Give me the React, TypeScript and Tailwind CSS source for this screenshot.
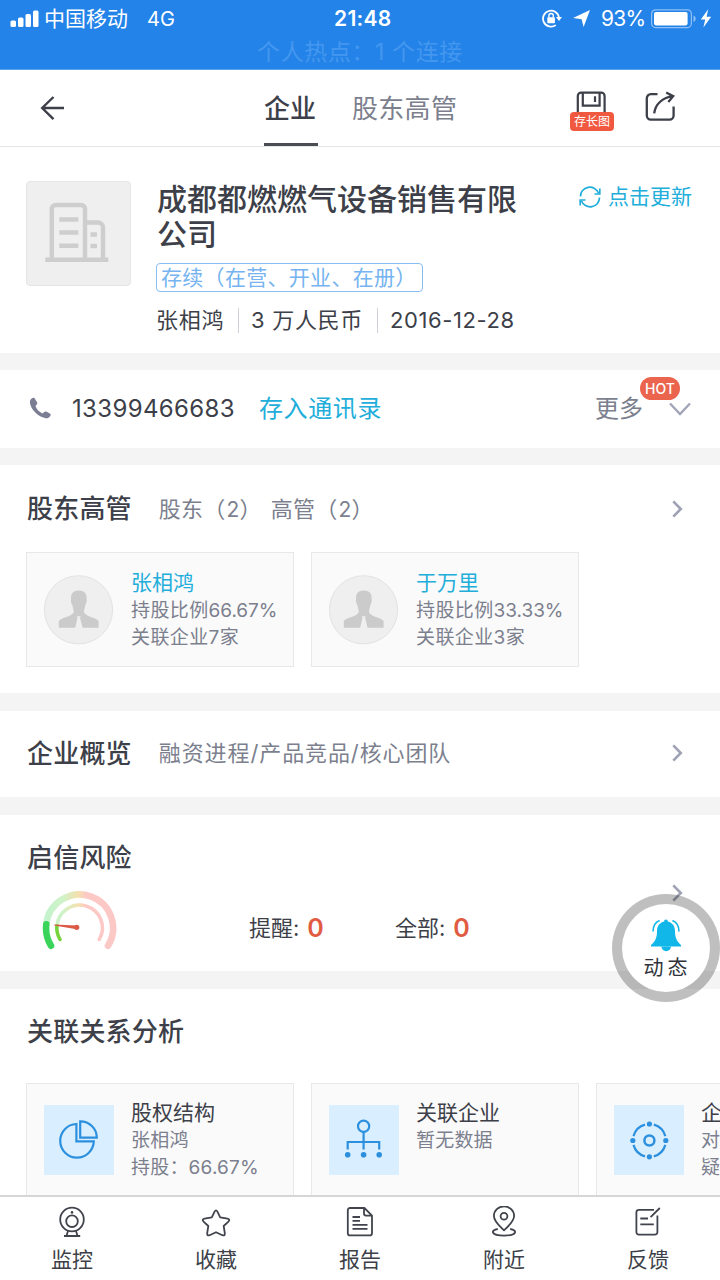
import React from "react";

const FONT = "font-['Inter','Noto_Sans_CJK_SC',sans-serif]";

function ChevronRight() {
  return (
    <svg className="block h-[20px] w-[14px]" viewBox="0 0 14 20" fill="none" stroke="#9fa2b4" strokeWidth="2.6">
      <path d="M2.3 2.3 L9.8 10 L2.3 17.7" />
    </svg>
  );
}

function StatusBar() {
  return (
    <div className="h-[70px] shrink-0 border-b border-[#5aa2ee] bg-[#2383e8] text-white">
      <div className="flex h-[37px] items-center">
        <div className="flex w-[334px] items-center pl-[10px]">
          <svg className="h-[18px] w-[29px]" viewBox="0 0 29 18" fill="#fff">
            <rect x="0.5" y="10.5" width="5.5" height="6.5" rx="1.5" />
            <rect x="8" y="7.5" width="5.5" height="9.5" rx="1.5" />
            <rect x="15.5" y="4" width="5.5" height="13" rx="1.5" />
            <rect x="23" y="0.5" width="5.5" height="16.5" rx="1.5" />
          </svg>
          <span className="ml-[5px] text-[21px] leading-[28px]">中国移动</span>
          <span className="ml-[19px] text-[20px] leading-[28px] tracking-[0.2px]">4G</span>
        </div>
        <span className="w-[207px] text-[21px] font-semibold leading-[28px] tracking-[0.3px]">21:48</span>
        <svg className="h-[20px] w-[22px]" viewBox="0 0 22 20" fill="none" stroke="#fff" strokeWidth="1.8">
          <path d="M14.8 16.1 A8 8 0 1 1 18 8.7" />
          <path d="M15 8 L21 8 L18 12 Z" fill="#fff" stroke="none" />
          <rect x="6.3" y="8.3" width="7.6" height="6" rx="0.8" fill="#fff" stroke="none" />
          <path d="M7.9 8.5 V6.7 a2.2 2.2 0 0 1 4.4 0 V8.5" strokeWidth="1.4" />
        </svg>
        <svg className="ml-[9px] h-[20px] w-[19px]" viewBox="0 0 19 20" fill="#fff">
          <path d="M18 1 L11.6 18 L9.6 10.3 L1 9.1 Z" />
        </svg>
        <span className="ml-[10px] w-[50px] whitespace-nowrap text-[21px] leading-[28px] tracking-[-0.8px]">93%</span>
        <svg className="h-[20px] w-[45px]" viewBox="0 0 45 20" fill="none">
          <rect x="0.6" y="0.8" width="39.8" height="17.8" rx="4" stroke="#8fc0f5" strokeWidth="1.2" />
          <rect x="3" y="3" width="33.6" height="13.4" rx="1.8" fill="#fff" />
          <path d="M42.5 6.5 a3.4 3.4 0 0 1 0 6.4z" fill="#8fc0f5" />
        </svg>
        <svg className="ml-[4px] h-[20px] w-[12px]" viewBox="0 0 12 20" fill="#fff">
          <path d="M8.2 0.3 L0.8 10.5 H5.2 L3.4 18.5 L11.2 7.7 H6.6 Z" />
        </svg>
      </div>
      <div className="flex justify-center text-[23px] leading-[30px] tracking-[0.6px] text-[#4397ef]">个人热点：1 个连接</div>
    </div>
  );
}

function Header() {
  return (
    <header className="flex h-[77px] shrink-0 border-b border-[#e6e6e6] bg-white">
      <svg className="ml-[40px] mt-[26px] h-[25px] w-[25px]" viewBox="0 0 25 25" fill="none" stroke="#3d3f49" strokeWidth="2.4">
        <path d="M24 12 H2.5 M13.5 1 L2.2 12 L13.5 23.2" />
      </svg>
      <div className="ml-[199px] flex w-[54px] flex-col justify-between">
        <span className="mt-[20px] whitespace-nowrap text-[26px] font-medium leading-[38px] text-[#3d3f49]">企业</span>
        <span className="h-[3px] bg-[#4b4d54]" />
      </div>
      <span className="ml-[34px] mt-[20px] w-[218px] whitespace-nowrap text-[26px] leading-[38px] tracking-[0.3px] text-[#7c7f8e]">股东高管</span>
      <div className="relative mt-[21px] h-[42px] w-[44px]">
        <svg className="ml-[6px] h-[24px] w-[30px]" viewBox="0 0 30 24" fill="none" stroke="#3d3f49" strokeWidth="2.2">
          <path d="M1.8 22 V5 a3.4 3.4 0 0 1 3.4-3.4 H25.2 a3.4 3.4 0 0 1 3.4 3.4 V22" />
          <path d="M6.8 1.5 V14.6 H23.6 V1.5 M19 5.3 V11" />
        </svg>
        <span className="absolute left-0 top-[21px] flex h-[19px] w-[44px] items-center justify-center rounded-[4px] bg-[#f05840] text-[12px] leading-[19px] text-white">存长图</span>
      </div>
      <svg className="ml-[31px] mt-[21px] h-[32px] w-[32px]" viewBox="0 0 32 32" fill="none" stroke="#3d3f49" strokeWidth="2.3">
        <path d="M12.5 3.2 H5.8 A4 4 0 0 0 1.8 7.2 V24.6 A4 4 0 0 0 5.8 28.6 H24.6 A4 4 0 0 0 28.6 24.6 V15.5" />
        <path d="M9.2 22.4 C10.2 13 17.8 6.5 28 5.2 M21.2 1.4 L28.2 5.2 L23.3 11" />
      </svg>
    </header>
  );
}

function Company() {
  return (
    <section className="flex h-[206px] shrink-0 bg-white pl-[26px] pt-[34px]">
      <div className="h-[105px] w-[105px] shrink-0 rounded-[4px] border border-[#e5e5e5] bg-[#efefef]">
        <svg className="h-[103px] w-[103px]" viewBox="0 0 103 103" fill="none" stroke="#cecece" strokeWidth="4.4">
          <path d="M24.8 78 V27 a4 4 0 0 1 4-4 H54 a4 4 0 0 1 4 4 V78 M58 40.5 H71 a5 5 0 0 1 5 5 V78" />
          <path d="M18.3 77.8 H81.3 M32.3 37.5 H51.3 M32.3 50.5 H51.3 M32.3 63.7 H51.3 M63.5 52.5 H70 M63.5 64 H70" />
        </svg>
      </div>
      <div className="ml-[25px] flex w-[366px] flex-col items-start text-[#3d3f49]">
        <h1 className="ml-px mt-[1px] w-[362px] text-[30px] font-medium leading-[35px]">成都都燃燃气设备销售有限公司</h1>
        <span className="mt-[11px] h-[29px] w-[267px] whitespace-nowrap rounded-[4px] border border-[#86bdf2] pl-[4px] text-[21px] leading-[27px] tracking-[0.3px] text-[#75b4f0]">存续（在营、开业、在册）</span>
        <div className="mt-[13px] flex items-center whitespace-nowrap text-[22px] leading-[31px]">
          <span className="w-[82px] tracking-[0.8px]">张相鸿</span>
          <span className="h-[25px] w-px bg-[#cfd0d8]" />
          <span className="w-[125px] pl-[12px] tracking-[0.7px]">3 万人民币</span>
          <span className="ml-[13px] h-[25px] w-px bg-[#cfd0d8]" />
          <span className="pl-[12px] tracking-[0.6px]">2016-12-28</span>
        </div>
      </div>
      <div className="ml-[57px] flex h-[32px] items-center text-[#22aedb]">
        <svg className="h-[22px] w-[22px]" viewBox="0 0 22 22" fill="none" stroke="#22aedb" strokeWidth="1.7">
          <path d="M1.5 10.5 A9.3 9 0 0 1 19.6 7.3 M20.5 11.5 A9.3 9 0 0 1 2.4 14.7" />
          <path d="M20.8 2.5 V8 H15.5 M1.2 19.5 V14 H6.5" />
        </svg>
        <span className="ml-[7px] whitespace-nowrap text-[21px] leading-[32px]">点击更新</span>
      </div>
    </section>
  );
}

function Phone() {
  return (
    <section className="flex h-[78px] shrink-0 items-center bg-white pl-[28px]">
      <svg className="h-[24px] w-[24px]" viewBox="0 0 24 24" fill="#7b7e92">
        <path d="M2.2 3.2 C3.2 1.4 5.3 0 6.6 1.3 L9.2 5.4 C9.9 6.8 8 7.9 7.5 9.1 C8.4 12.4 11.2 15.2 14.4 16.4 C15.6 15.7 16.8 13.9 18.4 14.5 L22.2 16.8 C23.6 17.8 21.8 20.2 20.2 21 C17.6 22.2 11.6 19.6 7.6 15.8 C3.6 11.8 1 6.4 2.2 3.2Z" />
      </svg>
      <span className="ml-[20px] w-[187px] text-[24px] tracking-[0.35px] text-[#3d3f49]">13399466683</span>
      <span className="w-[336px] text-[24px] tracking-[0.6px] text-[#22aedb]">存入通讯录</span>
      <div className="relative flex w-[96px] items-center justify-between">
        <span className="text-[24px] text-[#7c7f8e]">更多</span>
        <svg className="h-[14px] w-[22px]" viewBox="0 0 22 14" fill="none" stroke="#a2a5b6" strokeWidth="2.4">
          <path d="M1 1.5 L11 12 L21 1.5" />
        </svg>
        <span className="absolute left-[45px] top-[-14px] flex h-[23px] w-[40px] items-center justify-center rounded-full bg-[#ea644e] text-[14px] font-medium leading-[23px] tracking-[0.1px] text-white">HOT</span>
      </div>
    </section>
  );
}

function CountLabel({ label, count }: { label: string; count: number }) {
  return (
    <span className="w-[112px] whitespace-nowrap font-['Noto_Sans_CJK_SC',sans-serif] tracking-[0.2px]">
      {label}（<span className="ml-px font-['Inter'] text-[21px]">{count}</span>）
    </span>
  );
}

function PersonCard({ name, ratio, count }: { name: string; ratio: string; count: string }) {
  return (
    <div className="flex h-[115px] w-[268px] border border-[#e8e8e8] bg-[#fafafa] pl-[17px]">
      <svg className="mt-[22px] h-[70px] w-[70px]" viewBox="0 0 70 70">
        <circle cx="34.5" cy="34.8" r="34.1" fill="#efefef" stroke="#e2e2e2" />
        <path fill="#cbcbcb" d="M34.8 15.5 C40.3 15.5 43 18.5 42.6 23.5 C43.2 27.5 41.8 28.5 41.2 30.5 C40.8 33.5 39.8 35 40 37.5 C43.4 42.5 50.4 41.5 54.6 46 V52.7 H38.6 L36 42.8 L36.9 41.3 H32.7 L33.5 42.8 L31.2 52.7 H14.8 V46 C18.9 41.5 26.4 42.5 29.7 37.5 C29.9 35 28.9 33.5 28.5 30.5 C27.7 28.5 26.5 27.5 27.1 23.5 C26.7 18.5 29.3 15.5 34.8 15.5Z" />
      </svg>
      <div className="ml-[17px] mt-[16px] flex flex-col whitespace-nowrap text-[19px] leading-[27px] tracking-[0.4px] text-[#7c7f8e]">
        <span className="text-[21px] leading-[28px] tracking-[0px] text-[#22aedb]">{name}</span>
        <span>持股比例<span className="tracking-[-0.05px]">{ratio}</span></span>
        <span>关联企业{count}家</span>
      </div>
    </div>
  );
}

function Gauge() {
  return (
    <svg className="h-[60px] w-[76px]" viewBox="0 0 76 60" fill="none" strokeLinecap="round">
      <defs>
        <linearGradient id="outer" gradientUnits="userSpaceOnUse" x1="4" x2="71" y1="0" y2="0">
          <stop offset="0" stopColor="#c4f3cd" />
          <stop offset="0.25" stopColor="#d0f2c8" />
          <stop offset="0.48" stopColor="#f5e0ae" />
          <stop offset="0.6" stopColor="#fcc9c5" />
          <stop offset="1" stopColor="#fcc8c6" />
        </linearGradient>
      </defs>
      <path d="M4.3 34 A33.5 33.5 0 1 1 66 55.7" stroke="url(#outer)" strokeWidth="6.6" />
      <path d="M14.9 36 A22.8 22.8 0 1 1 57.3 49.4" stroke="url(#outer)" strokeWidth="3.6" />
      <path d="M4.3 34.2 A33.5 33.5 0 0 0 9 55.7" stroke="#3bd45b" strokeWidth="6.6" />
      <path d="M14.9 36 A22.8 22.8 0 0 0 18 49.4" stroke="#77d33d" strokeWidth="3.6" />
      <path d="M12.3 34.6 L34.7 35.6 V39.2 L12.3 35.6 Z" fill="#dc5a45" />
      <circle cx="34.7" cy="37.3" r="2.6" fill="#dc5a45" />
    </svg>
  );
}

const analysisCards = [
  {
    title: "股权结构",
    lines: ["张相鸿", "持股：66.67%"],
    icon: (
      <g>
        <path d="M32.4 19 A16.8 16.8 0 1 0 49.8 36.4 H32.4 Z" />
        <path d="M36.2 16.4 V32.6 H52.8 A16.4 16.4 0 0 0 36.2 16.4 Z" />
      </g>
    ),
  },
  {
    title: "关联企业",
    lines: ["暂无数据"],
    icon: (
      <g>
        <circle cx="34.6" cy="21.2" r="5.6" />
        <path d="M34.6 26.8 V44.5 M18.7 44.5 V37 H50.2 V44.5" />
        <g fill="#2c90de" stroke="none">
          <circle cx="18.7" cy="49.8" r="2.8" />
          <circle cx="34.6" cy="49.8" r="2.8" />
          <circle cx="50.2" cy="49.8" r="2.8" />
        </g>
      </g>
    ),
  },
  {
    title: "企",
    lines: ["对", "疑"],
    icon: (
      <g>
        <circle cx="35.4" cy="35.5" r="5" strokeWidth="2.5" />
        <path d="M39.8 19.6 A16.5 16.5 0 0 1 51.3 31.1 M51.3 39.9 A16.5 16.5 0 0 1 39.8 51.4 M31 51.4 A16.5 16.5 0 0 1 19.5 39.9 M19.5 31.1 A16.5 16.5 0 0 1 31 19.6" />
        <g fill="#2c90de" stroke="none">
          <circle cx="35.4" cy="19" r="2.6" />
          <circle cx="35.4" cy="51.8" r="2.6" />
          <circle cx="18.8" cy="35.5" r="2.6" />
          <circle cx="51.8" cy="35.5" r="2.6" />
        </g>
      </g>
    ),
  },
];

const tabs = [
  {
    label: "监控",
    icon: (
      <g>
        <circle cx="16" cy="13.5" r="11.8" />
        <circle cx="16" cy="15.2" r="5.8" />
        <circle cx="16" cy="6.4" r="1.3" fill="#42444d" stroke="none" />
        <path d="M12 25 L10.6 29.6 M20 25 L21.4 29.6 M8 30 H24.2" />
      </g>
    ),
  },
  {
    label: "收藏",
    icon: (
      <path d="M14.7 5.4 Q16 3.2 17.3 5.4 L20.2 11.4 L27.5 12.6 Q30.6 13.4 28.4 15.6 L23.7 20 L24.8 27.2 Q25 30.2 22.4 29.2 L16 26.2 L9.6 29.2 Q7 30.2 7.2 27.2 L8.3 20 L3.6 15.6 Q1.4 13.4 4.5 12.6 L11.8 11.4 Z" />
    ),
  },
  {
    label: "报告",
    icon: (
      <g>
        <path d="M6 2 H20.4 L28 9.6 V27.2 a2.2 2.2 0 0 1 -2.2 2.2 H6 a2.2 2.2 0 0 1 -2.2 -2.2 V4.2 A2.2 2.2 0 0 1 6 2 Z M20 2 V7.6 a2 2 0 0 0 2 2 H28" />
        <path d="M8.5 11 H16 M8.5 14.8 H16 M8.5 18.8 H23.5 M8.5 22.8 H23.5" />
      </g>
    ),
  },
  {
    label: "附近",
    icon: (
      <g>
        <circle cx="16" cy="10.3" r="3.4" />
        <path d="M16 24.4 C11.5 20 5.9 15.5 5.9 10 A10.1 9.6 0 0 1 26.1 10 C26.1 15.5 20.5 20 16 24.4 Z" />
        <path d="M9.8 23 C2.2 24.2 2.8 29.6 16 29.6 C29.2 29.6 29.8 24.2 22.2 23" />
      </g>
    ),
  },
  {
    label: "反馈",
    icon: (
      <g>
        <path d="M22 3.8 H6.8 a2.4 2.4 0 0 0 -2.4 2.4 V26.2 a2.4 2.4 0 0 0 2.4 2.4 H23 a2.4 2.4 0 0 0 2.4 -2.4 V9.5" />
        <path d="M8.3 12.5 H16 M8.3 18.4 H21.8 M18.6 11.2 L27.8 2" />
      </g>
    ),
  },
];

const heading = "whitespace-nowrap text-[26px] font-medium tracking-[0.2px] text-[#3d3f49]";

export default function App() {
  return (
    <div className={`${FONT} relative flex h-[1280px] w-[720px] flex-col overflow-hidden bg-[#f4f4f4]`}>
      <StatusBar />
      <Header />
      <Company />
      <div className="h-[17px] shrink-0" />
      <Phone />
      <div className="h-[17px] shrink-0" />
      <section className="h-[228px] shrink-0 bg-white px-[26px]">
        <div className="flex h-[87px] items-center pl-px text-[22px] text-[#7c7f8e]">
          <h2 className={heading}>股东高管</h2>
          <div className="ml-[27px] flex">
            <CountLabel label="股东" count={2} />
            <CountLabel label="高管" count={2} />
          </div>
          <span className="ml-auto mr-[9px]"><ChevronRight /></span>
        </div>
        <div className="flex gap-[17px]">
          <PersonCard name="张相鸿" ratio="66.67%" count="7" />
          <PersonCard name="于万里" ratio="33.33%" count="3" />
        </div>
      </section>
      <div className="h-[18px] shrink-0" />
      <section className="flex h-[86px] shrink-0 items-center bg-white px-[26px] pb-[2px] pl-[27px]">
        <h2 className={heading}>企业概览</h2>
        <span className="ml-[27px] whitespace-nowrap text-[22px] tracking-[0.9px] text-[#7c7f8e]">融资进程/产品竞品/核心团队</span>
        <span className="ml-auto mr-[9px]"><ChevronRight /></span>
      </section>
      <div className="h-[18px] shrink-0" />
      <section className="flex h-[156px] shrink-0 bg-white pl-[27px] pr-[35px] text-[#3d3f49]">
        <div className="flex w-[222px] flex-col pt-[24px]">
          <h2 className={`${heading} leading-[38px]`}>启信风险</h2>
          <div className="ml-[15px] mt-[13px]"><Gauge /></div>
        </div>
        <div className="flex w-[146px] items-center self-start pt-[97px] text-[22px] leading-[32px]">
          提醒:<span className="ml-[8px] text-[25px] font-semibold text-[#e15b43]">0</span>
        </div>
        <div className="flex items-center self-start pt-[97px] text-[22px] leading-[32px]">
          全部:<span className="ml-[8px] text-[25px] font-semibold text-[#e15b43]">0</span>
        </div>
        <div className="ml-auto self-center"><ChevronRight /></div>
      </section>
      <div className="h-[18px] shrink-0" />
      <section className="h-[206px] shrink-0 overflow-hidden bg-white pl-[26px] pt-[24px]">
        <h2 className={`${heading} pl-px leading-[38px]`}>关联关系分析</h2>
        <div className="mt-[32px] flex gap-[17px]">
          {analysisCards.map((c) => (
            <div key={c.title} className="flex h-[115px] w-[268px] shrink-0 border border-[#e8e8e8] bg-[#fafafa] pl-[17px]">
              <svg className="mt-[21px] h-[70px] w-[70px] shrink-0 bg-[#d9eefe]" viewBox="0 0 70 70" fill="none" stroke="#2c90de" strokeWidth="2.2">
                {c.icon}
              </svg>
              <div className="ml-[17px] mt-[15px] flex flex-col whitespace-nowrap text-[19px] leading-[27px] tracking-[0.2px] text-[#7c7f8e]">
                <span className="text-[21px] leading-[28px] tracking-[0px] text-[#3d3f49]">{c.title}</span>
                {c.lines.map((l) => <span key={l}>{l}</span>)}
              </div>
            </div>
          ))}
        </div>
      </section>
      <nav className="grid h-[85px] shrink-0 grid-cols-5 border-t-2 border-[#d6d6d6] bg-white">
        {tabs.map((t) => (
          <div key={t.label} className="flex flex-col items-center pt-[9px]">
            <svg className="h-[32px] w-[32px]" viewBox="0 0 32 32" fill="none" stroke="#42444d" strokeWidth="1.8" strokeLinejoin="round">
              {t.icon}
            </svg>
            <span className="mt-[7px] text-[21px] leading-[30px] text-[#3d3f49]">{t.label}</span>
          </div>
        ))}
      </nav>
      <button className="absolute left-[612px] top-[894px] h-[108px] w-[108px] rounded-full bg-black/25 p-[10px]">
        <span className="flex h-[88px] w-[88px] flex-col items-center rounded-full bg-white pt-[14px]">
          <svg className="h-[34px] w-[32px] shrink-0" viewBox="0 0 32 34" fill="#12b7ea">
            <path d="M16 1.5 C17.4 1.5 17.8 2.4 17.8 3.4 C23 4.6 25 8.6 25 13 C25 20 27 23.5 31 27 V28.6 H1 V27 C5 23.5 7 20 7 13 C7 8.6 9 4.6 14.2 3.4 C14.2 2.4 14.6 1.5 16 1.5Z" />
            <path d="M11.4 28.4 H21 A4.8 4.8 0 0 1 11.4 28.4Z" />
            <path d="M9.6 2.6 C4.6 4.6 3 8.8 3 13.6 M22.4 2.6 C27.4 4.6 29 8.8 29 13.6" fill="none" stroke="#12b7ea" strokeWidth="1.6" />
          </svg>
          <span className="mt-[2px] whitespace-nowrap pl-[3px] text-[20px] leading-[28px] tracking-[4px] text-[#303239]">动态</span>
        </span>
      </button>
    </div>
  );
}
